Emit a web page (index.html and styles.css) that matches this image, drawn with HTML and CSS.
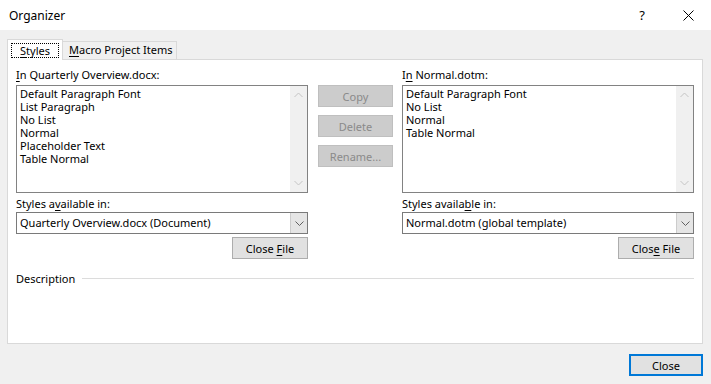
FILE: index.html
```html
<!DOCTYPE html>
<html>
<head>
<meta charset="utf-8">
<link rel="stylesheet" href="styles.css">
</head>
<body>
<div class="dialog">
  <div class="titlebar">
    <span class="title">Organizer</span>
    <span class="cap-btn help">?</span>
    <span class="cap-btn">
      <svg width="11" height="11" viewBox="0 0 11 11"><path d="M0.5 0.5 L10.5 10.5 M10.5 0.5 L0.5 10.5" stroke="#000" stroke-width="1" fill="none"/></svg>
    </span>
  </div>
  <div class="content">
    <div class="tabs">
      <div class="tab active"><span class="focus"><u>S</u>tyles</span></div>
      <div class="tab second"><u>M</u>acro Project Items</div>
    </div>
    <div class="panel">
      <div class="cols">
        <div class="col">
          <div class="label"><u>I</u>n Quarterly Overview.docx:</div>
          <div class="listbox">
            <div class="items">
              <div>Default Paragraph Font</div>
              <div>List Paragraph</div>
              <div>No List</div>
              <div>Normal</div>
              <div>Placeholder Text</div>
              <div>Table Normal</div>
            </div>
            <div class="vscroll">
              <svg width="9" height="6" viewBox="0 0 9 6"><path d="M0.5 5 L4.5 1 L8.5 5" stroke="#c4c4c4" fill="none"/></svg>
              <svg width="9" height="6" viewBox="0 0 9 6"><path d="M0.5 1 L4.5 5 L8.5 1" stroke="#c4c4c4" fill="none"/></svg>
            </div>
          </div>
          <div class="label label2">Styles a<u>v</u>ailable in:</div>
          <div class="combo">
            <span class="combo-text">Quarterly Overview.docx (Document)</span>
            <span class="combo-btn"><svg width="9" height="5" viewBox="0 0 9 5"><path d="M0.5 0.5 L4.5 4.5 L8.5 0.5" stroke="#606060" fill="none"/></svg></span>
          </div>
          <div class="btnrow"><span class="btn"><span>Close <u>F</u>ile</span></span></div>
        </div>
        <div class="mid">
          <span class="btn disabled">Copy</span>
          <span class="btn disabled">Delete</span>
          <span class="btn disabled">Rename...</span>
        </div>
        <div class="col">
          <div class="label">I<u>n</u> Normal.dotm:</div>
          <div class="listbox">
            <div class="items">
              <div>Default Paragraph Font</div>
              <div>No List</div>
              <div>Normal</div>
              <div>Table Normal</div>
            </div>
            <div class="vscroll">
              <svg width="9" height="6" viewBox="0 0 9 6"><path d="M0.5 5 L4.5 1 L8.5 5" stroke="#c4c4c4" fill="none"/></svg>
              <svg width="9" height="6" viewBox="0 0 9 6"><path d="M0.5 1 L4.5 5 L8.5 1" stroke="#c4c4c4" fill="none"/></svg>
            </div>
          </div>
          <div class="label label2">Styles availa<u>b</u>le in:</div>
          <div class="combo">
            <span class="combo-text">Normal.dotm (global template)</span>
            <span class="combo-btn"><svg width="9" height="5" viewBox="0 0 9 5"><path d="M0.5 0.5 L4.5 4.5 L8.5 0.5" stroke="#606060" fill="none"/></svg></span>
          </div>
          <div class="btnrow"><span class="btn"><span>Clos<u>e</u> File</span></span></div>
        </div>
      </div>
      <div class="desc">
        <span>Description</span>
        <span class="rule"></span>
      </div>
    </div>
    <div class="footer"><span class="btn default">Close</span></div>
  </div>
</div>
</body>
</html>
```

FILE: styles.css
```css
* { box-sizing: border-box; }
html, body { margin: 0; padding: 0; }
body {
  width: 711px;
  height: 384px;
  overflow: hidden;
  background: #f0f0f0;
  font-family: "Noto Sans", "Open Sans", sans-serif;
  font-size: 11px;
  color: #000;
}
u { text-decoration: underline; text-underline-offset: 2px; }
.dialog {
  width: 711px;
  height: 384px;
  display: flex;
  flex-direction: column;
}
.titlebar {
  height: 30px;
  background: #fff;
  display: flex;
  align-items: center;
  padding-left: 9px;
  font-size: 12px;
}
.title { flex: 1; }
.cap-btn {
  width: 46px;
  height: 30px;
  display: flex;
  align-items: center;
  justify-content: center;
}
.help { font-size: 13px; }
.content {
  flex: 1;
  display: flex;
  flex-direction: column;
  padding: 9px 8px 8px 7px;
}
.tabs {
  height: 20px;
  display: flex;
  align-items: flex-end;
}
.tab {
  height: 18px;
  border: 1px solid #d9d9d9;
  border-bottom: none;
  line-height: 16px;
  white-space: nowrap;
}
.tab.active {
  width: 56px;
  height: 21px;
  margin-bottom: -1px;
  background: #fff;
  padding: 3px 0 0 3px;
  position: relative;
  z-index: 1;
}
.focus {
  display: block;
  width: 48px;
  height: 15px;
  border: 1px dotted #000;
  line-height: 13px;
  text-align: center;
}
.tab.second {
  width: 114px;
  border-left: none;
  padding-left: 6px;
}
.panel {
  height: 285px;
  background: #fff;
  border: 1px solid #d9d9d9;
  padding: 7px 8px 0 8px;
}
.cols { display: flex; }
.col { width: 292px; display: flex; flex-direction: column; }
.label { height: 16px; line-height: 16px; margin-bottom: 2px; white-space: nowrap; }
.label2 { margin-top: 3px; margin-bottom: 0; }
.listbox {
  height: 108px;
  border: 1px solid #828282;
  display: flex;
}
.items {
  flex: 1;
  padding: 1px 3px;
  line-height: 13px;
}
.vscroll {
  width: 17px;
  background: #f0f0f0;
  display: flex;
  flex-direction: column;
  justify-content: space-between;
  align-items: center;
  padding: 6px 0 6px;
}
.combo {
  height: 22px;
  border: 1px solid #7a7a7a;
  display: flex;
  background: #fff;
}
.combo-text { flex: 1; padding-left: 3px; line-height: 20px; white-space: nowrap; }
.combo-btn {
  width: 17px;
  background: #e5e5e5;
  border-left: 1px solid #cccccc;
  display: flex;
  align-items: center;
  justify-content: center;
}
.btnrow { display: flex; justify-content: flex-end; margin-top: 3px; }
.btn {
  display: flex;
  align-items: center;
  justify-content: center;
  height: 22px;
  width: 76px;
  background: #e1e1e1;
  border: 1px solid #adadad;
  white-space: nowrap;
}
.mid {
  width: 75px;
  margin: 0 9px 0 10px;
  padding-top: 18px;
  display: flex;
  flex-direction: column;
  gap: 8px;
}
.btn.disabled {
  width: 75px;
  background: #cccccc;
  border-color: #bfbfbf;
  color: #8a8a8a;
}
.desc {
  margin-top: 11px;
  height: 16px;
  display: flex;
  align-items: center;
  width: 678px;
}
.rule {
  flex: 1;
  height: 1px;
  background: #dcdcdc;
  margin-left: 7px;
}
.footer {
  margin-top: 10px;
  display: flex;
  justify-content: flex-end;
}
.btn.default {
  width: 74px;
  border: 2px solid #0078d7;
}
```
